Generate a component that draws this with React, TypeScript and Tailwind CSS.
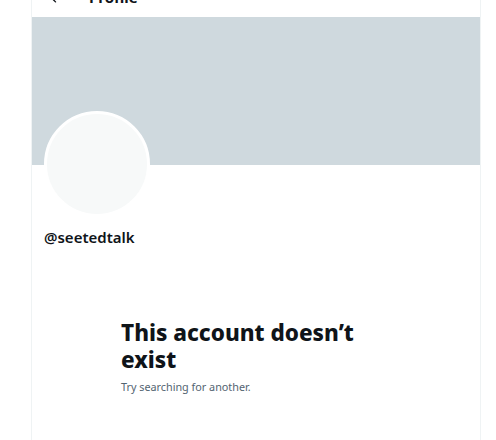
import { ArrowLeft } from 'lucide-react'

const font = { fontFamily: '"Segoe UI", "Noto Sans", "Liberation Sans", sans-serif' }

export default function App() {
  return (
    <div className="min-h-[440px] bg-white text-[#0f1419]" style={font}>
      <div className="ml-[31px] w-[450px] min-h-[440px] border-x border-[#eff3f4] overflow-hidden">
        <div className="-mt-[23px] h-[40px] flex items-center px-3">
          <ArrowLeft size={15} strokeWidth={2.2} className="ml-[4px]" />
          <div className="ml-[26px] text-[15px] font-bold leading-[18px]">Profile</div>
        </div>

        {/* banner */}
        <div className="h-[148px] bg-[#cfd9de]" />

        <div className="px-3">
          <div className="-mt-[54px] w-[106px] h-[106px] rounded-full border-[3px] border-white bg-[#f7f9f9]" />
          <div className="mt-[10px] text-[15px] font-semibold leading-[20px]">@seetedtalk</div>
        </div>

        {/* empty state */}
        <div className="mt-[72px] mx-auto w-[270px]">
          <h2 className="text-[22.5px] font-extrabold leading-[27px]">This account doesn’t exist</h2>
          <p className="mt-[6px] text-[10.8px] leading-[15px] text-[#536471]">Try searching for another.</p>
        </div>
      </div>
    </div>
  )
}
